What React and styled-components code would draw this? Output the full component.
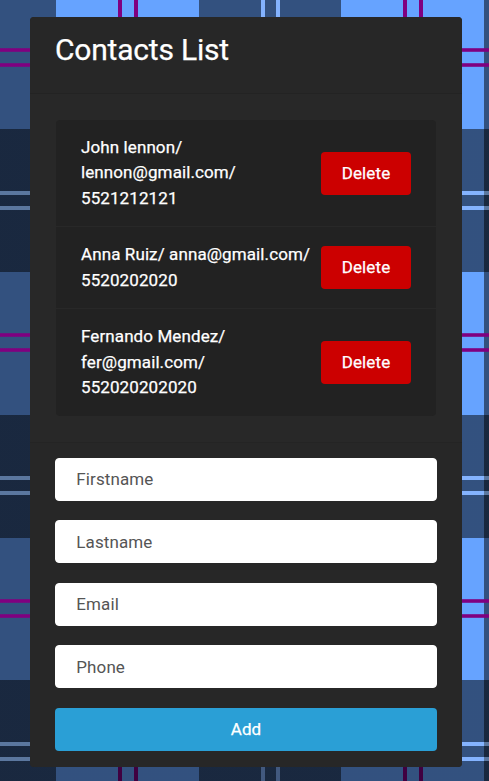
import React from "react";
import styled, { createGlobalStyle } from "styled-components";

// Plaid backdrop: each band is one background layer, listed from top to bottom.
const cols = (a, b) =>
  `linear-gradient(90deg, ${a} 56px, ${b} 56px 199px, ${a} 199px 341.5px, ${b} 341.5px 484px, ${a} 484px)`;
const rowLine = (image, y) => `${image} 0 ${y}px / 100% 4px no-repeat`;
const purple = "linear-gradient(rgba(128,0,128,.6), #800080 1px 3px, rgba(128,0,128,.6))";
const pale = cols("#5b779f", "#84b3ff");
const lines = (a, b) =>
  `linear-gradient(90deg, transparent 118.5px, ${a} 118.5px 122px, transparent 122px 134px, ${a} 134px 137.5px, transparent 137.5px 261px, ${b} 261px 265px, transparent 265px 276.5px, ${b} 276.5px 280.5px, transparent 280.5px 403.5px, ${a} 403.5px 407px, transparent 407px 419px, ${a} 419px 423px, transparent 423px)`;
const plaid = [
  ...[48, 63.4, 333, 348.4, 599, 614.4].map((y) => rowLine(purple, y)),
  ...[190.5, 206, 476, 491.4, 741.5, 757].map((y) => rowLine(pale, y)),
  "linear-gradient(transparent 129.5px, rgba(0,0,0,.5) 129.5px 272.5px, transparent 272.5px 415px, rgba(0,0,0,.5) 415px 538px, transparent 538px 680.5px, rgba(0,0,0,.5) 680.5px)",
  lines("#800080", "#84b3ff"),
  cols("#33517f", "#66a3ff"),
].join(", ");

const GlobalStyle = createGlobalStyle`
  * { box-sizing: border-box; }
  body { margin: 0; font-family: Roboto, "Liberation Sans", sans-serif; }
`;

const Page = styled.main`
  height: 781px;
  padding: 17px 27px 14px 30px;
  background: ${plaid};
  color: #fff;
  font-size: 17px;
  line-height: 25.5px;
`;

const Card = styled.section`
  height: 750px;
  overflow: hidden;
  border-radius: 4px;
  background: #282828;
`;

const Header = styled.header`
  height: 77px;
  padding: 14px 25px 0;
  border-bottom: 1px solid #232323;
  background: #272727;
`;

const Title = styled.h1`
  margin: 0;
  font-size: 30px;
  font-weight: 400;
  letter-spacing: -0.2px;
  line-height: 38px;
  -webkit-text-stroke: 0.25px #fff;
`;

const CardBody = styled.div`
  height: 348px;
  padding: 26px 26px 0;
`;

const ContactList = styled.ul`
  margin: 0;
  padding: 0;
  overflow: hidden;
  list-style: none;
  border-radius: 4px;
  background: #222;
  letter-spacing: 0.1px;
  -webkit-text-stroke: 0.25px #fff;
`;

const Contact = styled.li`
  display: flex;
  align-items: center;
  justify-content: space-between;
  height: ${(p) => p.$height}px;
  padding: 0 25px;

  & + & { border-top: 1px solid #282828; }
`;

const Details = styled.span`
  width: 235px;
`;

const Button = styled.button`
  flex: none;
  width: ${(p) => p.$width};
  height: 43px;
  padding: 1px 0 0;
  border: 0;
  border-radius: 4px;
  background: ${(p) => p.$color};
  color: #fff;
  font: inherit;
  letter-spacing: 0.1px;
  -webkit-text-stroke: 0.25px #fff;
`;

const Form = styled.form`
  display: flex;
  flex-direction: column;
  gap: 19.6px;
  height: 325px;
  padding: 14.6px 25px 0;
  border-top: 1px solid #242424;
  background: #272727;
`;

const Field = styled.input`
  width: 100%;
  height: 43px;
  padding: 0 20.3px;
  border: 1px solid #fff;
  border-radius: 4px;
  background: #fff;
  color: #222;
  font: inherit;
  letter-spacing: 0.1px;

  &::placeholder { color: #555; opacity: 1; }
`;

const contacts = [
  { name: "John lennon", email: "lennon@gmail.com", phone: "5521212121", height: 106 },
  { name: "Anna Ruiz", email: "anna@gmail.com", phone: "5520202020", height: 82 },
  { name: "Fernando Mendez", email: "fer@gmail.com", phone: "552020202020", height: 108 },
];

export default function App() {
  return (
    <>
      <GlobalStyle />
      <Page>
        <Card>
          <Header><Title>Contacts List</Title></Header>
          <CardBody>
            <ContactList>
              {contacts.map((c) => (
                <Contact key={c.email} $height={c.height}>
                  <Details>{`${c.name}/ ${c.email}/ ${c.phone}`}</Details>
                  <Button type="button" $width="90px" $color="#c00">Delete</Button>
                </Contact>
              ))}
            </ContactList>
          </CardBody>
          <Form>
            {["Firstname", "Lastname", "Email", "Phone"].map((label) => (
              <Field key={label} placeholder={label} />
            ))}
            <Button type="button" $width="100%" $color="#2a9fd6">Add</Button>
          </Form>
        </Card>
      </Page>
    </>
  );
}
